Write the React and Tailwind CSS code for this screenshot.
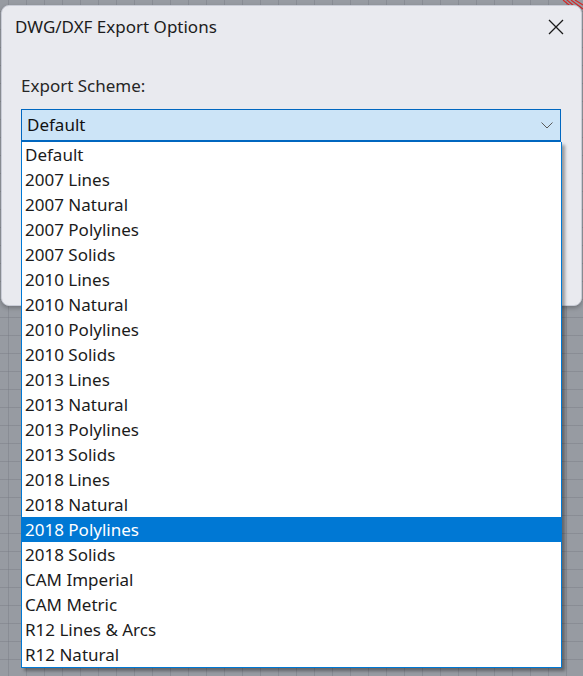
import React from 'react';

const schemes = [
    'Default',
    '2007 Lines', '2007 Natural', '2007 Polylines', '2007 Solids',
    '2010 Lines', '2010 Natural', '2010 Polylines', '2010 Solids',
    '2013 Lines', '2013 Natural', '2013 Polylines', '2013 Solids',
    '2018 Lines', '2018 Natural', '2018 Polylines', '2018 Solids',
    'CAM Imperial', 'CAM Metric', 'R12 Lines & Arcs', 'R12 Natural',
];

const App = () => {
    const selected = '2018 Polylines';

    return (
        <div
            className="relative w-[583px] h-[676px] overflow-hidden bg-[#979ba2] font-['Noto_Sans','Open_Sans',sans-serif]"
            style={{
                backgroundImage:
                    'linear-gradient(to right, rgba(120,124,132,0.45) 1px, transparent 1px), linear-gradient(to bottom, rgba(120,124,132,0.45) 1px, transparent 1px)',
                backgroundSize: '18px 18px',
                backgroundPosition: '8px 11px',
            }}
        >
            {/* red hatch behind the dialog corner */}
            <svg className="absolute right-0 top-0" width="22" height="14" viewBox="0 0 22 14">
                <path d="M2 0 L14 10 M6 0 L20 12 M10 0 L22 9 M14 0 L22 5" stroke="#d42a2a" strokeWidth="1.2" fill="none" />
            </svg>

            {/* Dialog */}
            <div className="relative ml-[1px] mt-[5px] w-[581px] h-[301px] rounded-[8px] bg-[#e9eaef] border border-[#c9ccd6] shadow-[0_2px_4px_rgba(0,0,0,0.25)]">
                <div className="h-[42px] flex items-center justify-between pl-[13px] pr-[17px]">
                    <span className="text-[17px] text-[#1c1c1c]">DWG/DXF Export Options</span>
                    <svg width="16" height="16" viewBox="0 0 16 16">
                        <path d="M1 1 L15 15 M15 1 L1 15" stroke="#1a1a1a" strokeWidth="1.3" fill="none" />
                    </svg>
                </div>

                <div className="px-[19px]">
                    <div className="mt-[26px] h-[24px] leading-[24px] text-[17px] text-[#262626]">Export Scheme:</div>

                    <div className="relative mt-[11px] w-[540px]">
                        <div className="h-[33px] flex items-center justify-between pl-[5px] pr-[7px] bg-[#cce4f7] border border-[#0067c0] border-b-2">
                            <span className="text-[17px] text-[#111]">Default</span>
                            <svg width="12" height="7" viewBox="0 0 12 7">
                                <path d="M0.5 0.5 L6 6 L11.5 0.5" stroke="#5a5a5a" strokeWidth="1" fill="none" />
                            </svg>
                        </div>

                        {/* Open dropdown list */}
                        <ul className="absolute left-0 top-full z-10 w-[541px] bg-white border border-t-0 border-[#0078d4] shadow-[3px_3px_3px_rgba(0,0,0,0.35)]">
                            {schemes.map((name) => (
                                <li
                                    key={name}
                                    className={`h-[25px] leading-[25px] pl-[3px] text-[17px] ${name === selected ? 'bg-[#0078d4] text-white' : 'text-[#1b1b1b]'}`}
                                >
                                    {name}
                                </li>
                            ))}
                        </ul>
                    </div>
                </div>
            </div>
        </div>
    );
};

export default App;
